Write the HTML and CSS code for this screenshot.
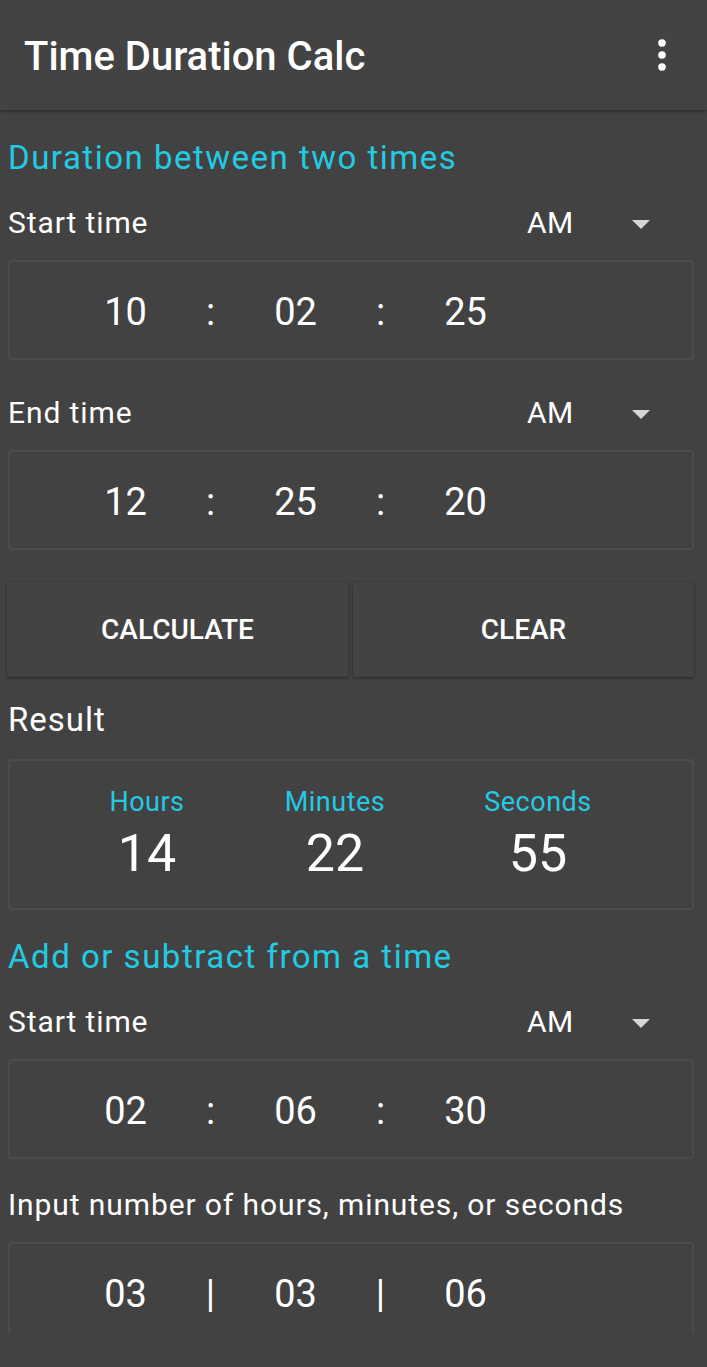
FILE: index.html
```html
<!DOCTYPE html>
<html lang="en">
<head>
<meta charset="utf-8">
<title>Time Duration Calc</title>
<link rel="stylesheet" href="styles.css">
</head>
<body>
<header class="appbar">
  <h1 class="appbar-title">Time Duration Calc</h1>
  <svg class="kebab" width="16" height="40" viewBox="0 0 16 40" aria-hidden="true">
    <circle cx="8" cy="8" r="3.8" fill="#fff"/>
    <circle cx="8" cy="20" r="3.8" fill="#fff"/>
    <circle cx="8" cy="32" r="3.8" fill="#fff"/>
  </svg>
</header>
<main class="content">
  <h2 class="section-title first">Duration between two times</h2>
  <div class="label-row">
    <span class="label">Start time</span>
    <span class="ampm">AM<span class="caret"></span></span>
  </div>
  <div class="time-box">
    <span class="cell">10</span><span class="cell">:</span><span class="cell">02</span><span class="cell">:</span><span class="cell">25</span>
  </div>
  <div class="label-row spaced">
    <span class="label">End time</span>
    <span class="ampm">AM<span class="caret"></span></span>
  </div>
  <div class="time-box">
    <span class="cell">12</span><span class="cell">:</span><span class="cell">25</span><span class="cell">:</span><span class="cell">20</span>
  </div>
  <div class="buttons">
    <button class="btn">CALCULATE</button>
    <button class="btn">CLEAR</button>
  </div>
  <div class="label-row result-label">
    <span class="label big">Result</span>
  </div>
  <div class="result-box">
    <div class="res-col"><span class="res-name">Hours</span><span class="res-val">14</span></div>
    <div class="res-col"><span class="res-name">Minutes</span><span class="res-val">22</span></div>
    <div class="res-col"><span class="res-name">Seconds</span><span class="res-val">55</span></div>
  </div>
  <h2 class="section-title second">Add or subtract from a time</h2>
  <div class="label-row">
    <span class="label">Start time</span>
    <span class="ampm">AM<span class="caret"></span></span>
  </div>
  <div class="time-box">
    <span class="cell">02</span><span class="cell">:</span><span class="cell">06</span><span class="cell">:</span><span class="cell">30</span>
  </div>
  <div class="label-row input-label">
    <span class="label">Input number of hours, minutes, or seconds</span>
  </div>
  <div class="time-box">
    <span class="cell">03</span><span class="cell">|</span><span class="cell">03</span><span class="cell">|</span><span class="cell">06</span>
  </div>
</main>
</body>
</html>
```
FILE: styles.css
```css
* { box-sizing: border-box; }
html, body { margin: 0; padding: 0; }
body {
  background: #424242;
  color: #ffffff;
  font-family: Roboto, "Noto Sans", "DejaVu Sans", sans-serif;
  width: 707px;
  height: 1367px;
  overflow: hidden;
}
.appbar {
  height: 110px;
  background: #434343;
  display: flex;
  align-items: center;
  justify-content: space-between;
  padding: 0 37px 0 24px;
  box-shadow: 0 1px 3px rgba(0,0,0,0.45);
  position: relative;
  z-index: 1;
}
.appbar-title {
  margin: 0;
  font-size: 40px;
  font-weight: 500;
  line-height: 40px;
  padding-top: 4px;
}
.kebab { display: block; }
.content {
  height: 1224px;
  overflow: hidden;
  padding: 0 13px 0 8px;
}
.section-title {
  margin: 0;
  color: #22cae2;
  font-size: 33px;
  font-weight: 400;
  letter-spacing: 1.5px;
  line-height: 40px;
  height: 40px;
}
.section-title.first { margin-top: 28px; }
.section-title.second { margin-top: 27px; }
.label-row {
  display: flex;
  align-items: center;
  height: 40px;
  margin-top: 25px;
}
.label-row.spaced { margin-top: 33px; }
.label-row.result-label { margin-top: 23px; }
.label-row.input-label { margin-top: 26px; }
.label {
  font-size: 30px;
  letter-spacing: 0.9px;
  line-height: 40px;
  flex: 1;
}
.label.big { font-size: 33px; letter-spacing: 1px; }
.ampm {
  font-size: 30px;
  letter-spacing: 0.5px;
  line-height: 40px;
  display: flex;
  align-items: center;
  width: 167px;
}
.caret {
  width: 0; height: 0;
  border-left: 9px solid transparent;
  border-right: 9px solid transparent;
  border-top: 9px solid #d6d6d6;
  margin-left: 58px;
  margin-top: 2px;
}
.time-box {
  margin-top: 17px;
  height: 100px;
  border: 2px solid #4c4c4c;
  border-radius: 4px;
  display: flex;
  align-items: center;
  padding-left: 73px;
  padding-top: 3px;
}
.cell {
  width: 85px;
  text-align: center;
  font-size: 38px;
  line-height: 44px;
}
.buttons {
  margin-top: 32px;
  display: flex;
  gap: 5px;
  margin-left: -1px;
  height: 95px;
}
.btn {
  flex: 1;
  background: #434343;
  border: none;
  border-radius: 2px;
  color: #fff;
  font-family: inherit;
  font-size: 28px;
  font-weight: 500;
  box-shadow: 0 1px 3px rgba(0,0,0,0.4), 0 0 1px rgba(0,0,0,0.3);
  padding: 0;
}
.result-box {
  margin-top: 19px;
  height: 151px;
  border: 2px solid #4c4c4c;
  border-radius: 4px;
  display: grid;
  grid-template-columns: 200px 176px 230px;
  padding-left: 37px;
  align-content: center;
}
.res-col {
  display: flex;
  flex-direction: column;
  align-items: center;
}
.res-name {
  color: #22cae2;
  font-size: 27px;
  letter-spacing: 0.5px;
  line-height: 30px;
}
.res-val {
  font-size: 52px;
  line-height: 56px;
  margin-top: 9px;
}
```
